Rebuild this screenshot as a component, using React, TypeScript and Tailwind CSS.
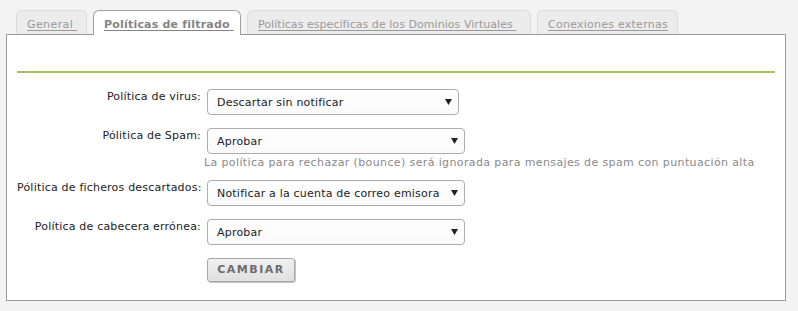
const FONT = "font-['DejaVu_Sans',Verdana,sans-serif]";

const TABS = [
  { label: 'General\u00a0', active: false, cls: 'w-[71px] tracking-[0.4px]' },
  { label: 'Políticas de filtrado\u00a0', active: true, cls: 'w-[148px] tracking-[0.2px]' },
  { label: 'Políticas específicas de los Dominios Virtuales\u00a0', active: false, cls: 'w-[284px] tracking-[0.05px]' },
  { label: 'Conexiones externas', active: false, cls: 'w-[141px] tracking-[0.25px]' },
];

const ROWS = [
  { label: 'Política de virus:', value: 'Descartar sin notificar', width: 'w-[252px]' },
  {
    label: 'Pólitica de Spam:',
    value: 'Aprobar',
    width: 'w-[258px]',
    help: 'La política para rechazar (bounce) será ignorada para mensajes de spam con puntuación alta',
  },
  { label: 'Pólitica de ficheros descartados:', value: 'Notificar a la cuenta de correo emisora', width: 'w-[258px]' },
  { label: 'Política de cabecera errónea:', value: 'Aprobar', width: 'w-[258px]' },
];

export default function App() {
  return (
    <div className={`${FONT} bg-[#f3f3f3] w-[798px] h-[311px] pt-[10px] px-[6px] text-[11px] tracking-[0.2px] text-[#222]`}>
      {/* pestañas */}
      <div className="flex gap-[6px] ml-[10px]">
        {TABS.map((t) => (
          <div
            key={t.label}
            className={`${t.cls} ${
              t.active
                ? 'relative z-10 -mb-px h-[25px] pl-[10px] pt-[6px] bg-white border border-b-0 border-[#a0a0a0] rounded-t-[6px] font-bold text-[#858585] whitespace-nowrap'
                : 'h-[24px] pl-[10px] pt-[6px] bg-[#ececec] border border-b-0 border-[#dcdcdc] rounded-t-[6px] text-[#9a9a9a] whitespace-nowrap'
            }`}
          >
            <span className="underline underline-offset-2 leading-[13px]">{t.label}</span>
          </div>
        ))}
      </div>

      {/* panel */}
      <div className="bg-white border border-[#9a9a9a] w-[780px] h-[267px] pt-[36px]">
        <div className="h-[2px] bg-[#a5c25b] mx-[10px]" />

        <div className="px-[10px] pt-[16px] grid grid-cols-[184px_1fr] gap-x-[3px]">
          {ROWS.map((r) => (
            <FormRow key={r.label} {...r} />
          ))}
          <div />
          <div className="pl-[3px]">
            <button className="h-[24px] w-[88px] rounded-[3px] border border-[#a8a8a8] bg-gradient-to-b from-[#f0f0f0] to-[#e0e0e0] shadow-[1px_1px_0_#c4c4c4] font-bold text-[11px] tracking-[1.5px] text-[#6c6c6c]">
              CAMBIAR
            </button>
          </div>
        </div>
      </div>
    </div>
  );
}

function FormRow({ label, value, width, help }: { label: string; value: string; width: string; help?: string }) {
  return (
    <>
      <div className="text-right whitespace-nowrap leading-[13px] pt-px">{label}</div>
      <div className={help ? 'mb-[11px]' : 'mb-[13px]'}>
        <div
          className={`${width} ml-[3px] h-[26px] flex items-center justify-between pl-[9px] pr-[6px] pt-[2px] border border-[#acacac] rounded-[4px] bg-gradient-to-b from-white to-[#fafafa]`}
        >
          <span className="whitespace-nowrap">{value}</span>
          <svg width="7" height="6" viewBox="0 0 7 6" className="mb-[3px]">
            <path d="M0 0h7L3.5 6z" fill="#222" />
          </svg>
        </div>
        {help && (
          <div className="text-[#8a8a8a] leading-[13px] mt-[2px] tracking-[0.38px] whitespace-nowrap">{help}</div>
        )}
      </div>
    </>
  );
}
